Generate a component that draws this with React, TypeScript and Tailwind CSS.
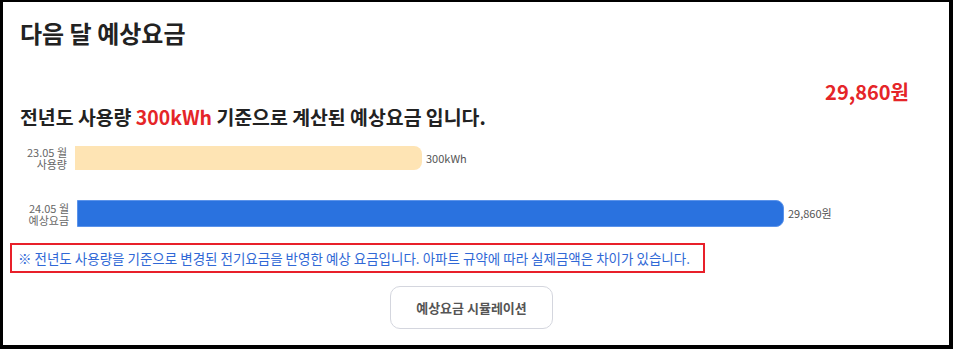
export default function App() {
  const font = { fontFamily: '"Noto Sans CJK KR", "Noto Sans", sans-serif' };
  return (
    <div className="h-[349px] w-[953px] bg-black pt-[2px] pl-[3px] pr-[4px] pb-[4px]" style={font}>
      <div className="flex h-full w-full flex-col bg-white">
        <div className="pl-[17px] pt-[14px] text-[24px] font-bold leading-[34px] text-[#222]">
          다음 달 예상요금
        </div>

        <div className="mt-[30px] flex justify-end pr-[40px] text-[20px] font-semibold leading-[24px] text-[#e52528]">
          29,860원
        </div>

        <div className="pl-[17px] text-[19.4px] font-bold leading-[26px] text-[#222]">
          전년도 사용량 <span className="text-[#e52528]">300kWh</span> 기준으로 계산된 예상요금 입니다.
        </div>

        <div className="mt-[16px] flex items-center">
          <div className="w-[64px] text-right text-[11px] leading-[12px] text-[#666]">
            <div>23.05 월</div>
            <div>사용량</div>
          </div>
          <div className="ml-[8px] h-[24px] w-[347px] rounded-r-[8px] bg-[#fee4b4]" />
          <div className="ml-[4px] text-[11px] text-[#555]">300kWh</div>
        </div>

        <div className="mt-[30px] flex items-center">
          <div className="w-[66px] text-right text-[11px] leading-[12px] text-[#666]">
            <div>24.05 월</div>
            <div>예상요금</div>
          </div>
          <div className="ml-[8px] h-[27px] w-[707px] rounded-r-[8px] border border-[#5b93ea] bg-[#2a72df]" />
          <div className="ml-[4px] text-[11px] text-[#555]">29,860원</div>
        </div>

        <div className="ml-[7px] mt-[16px] w-[695px] border-2 border-[#e8202a] px-[6px] py-[4px] text-[13.5px] leading-[18px] text-[#3068d6]">
          ※ 전년도 사용량을 기준으로 변경된 전기요금을 반영한 예상 요금입니다. 아파트 규약에 따라 실제금액은 차이가 있습니다.
        </div>

        <div className="mt-[13px] flex justify-center">
          <button className="ml-[-9px] h-[43px] w-[163px] rounded-[10px] border border-[#d4d6de] bg-white text-[13px] font-bold text-[#555]">
            예상요금 시뮬레이션
          </button>
        </div>
      </div>
    </div>
  );
}
